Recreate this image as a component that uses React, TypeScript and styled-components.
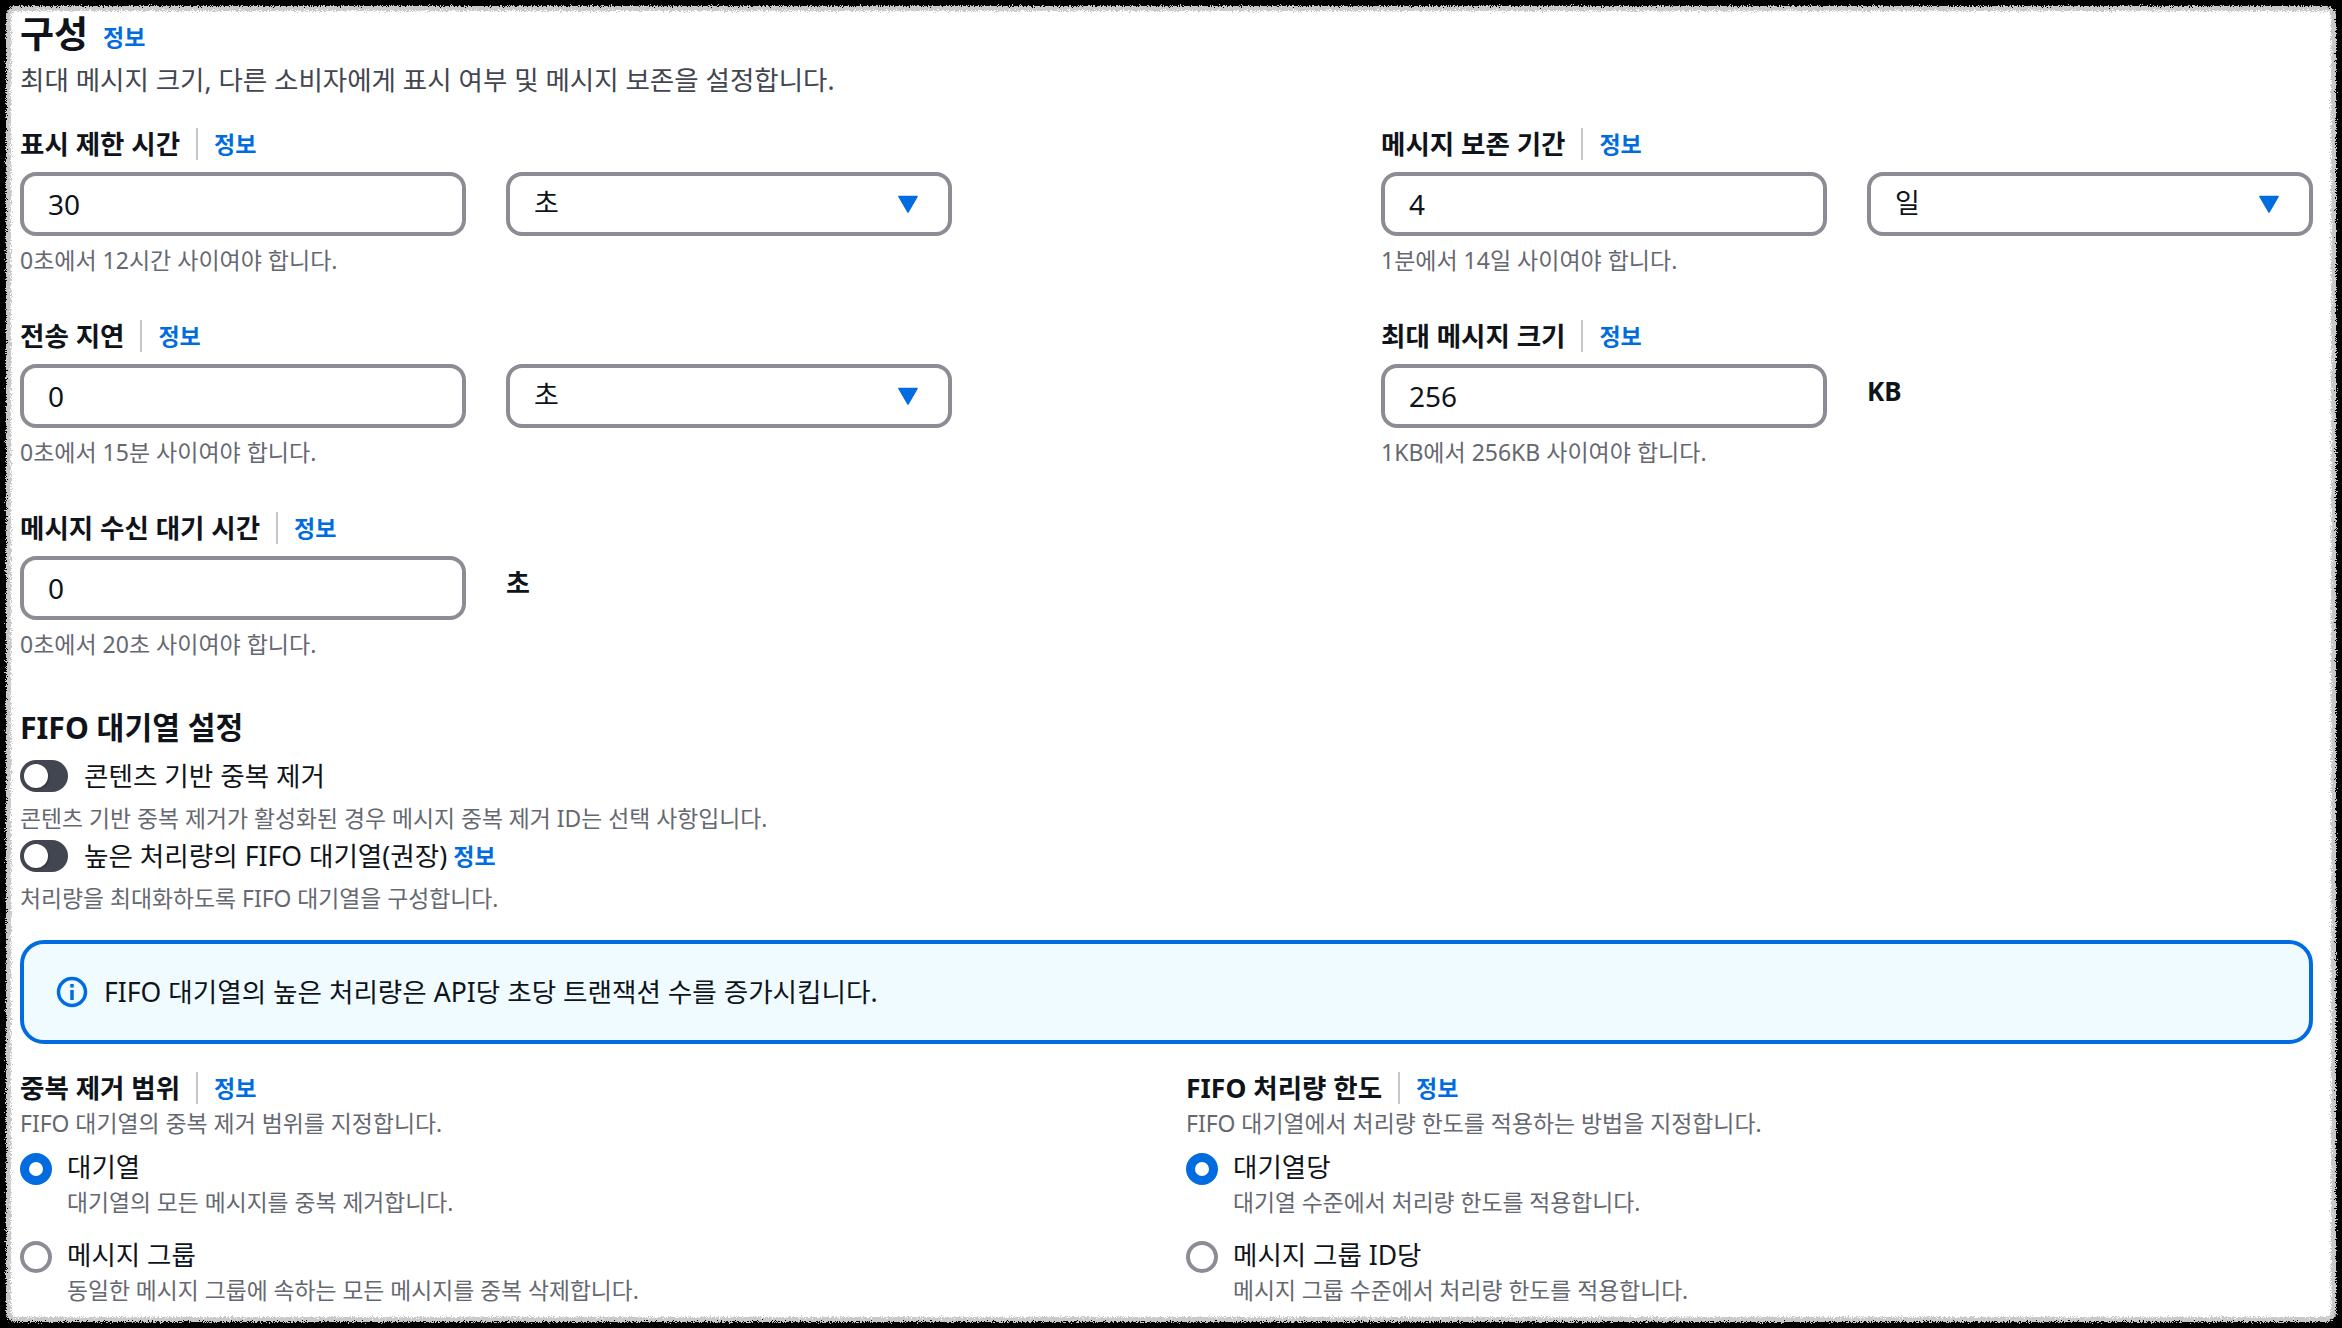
import React from 'react';
import styled, { createGlobalStyle } from 'styled-components';

const GlobalStyle = createGlobalStyle`
  html, body {
    margin: 0;
    padding: 0;
    background: #000000;
  }
  body {
    font-family: "Noto Sans", "Noto Sans CJK KR", sans-serif;
    color: #0f141a;
  }
`;

function InfoLink({ plain }: { plain?: boolean }) {
  return <Info $plain={plain}>정보</Info>;
}

function FieldLabel({ text }: { text: string }) {
  return (
    <LabelRow>
      <LabelText>{text}</LabelText>
      <Divider />
      <InfoLink />
    </LabelRow>
  );
}

function CaretDown() {
  return (
    <svg width="20" height="20" viewBox="0 0 20 20">
      <path d="M1 2.5 H19 L10 18 Z" fill="#006ce0" stroke="#006ce0" strokeWidth="1.5" strokeLinejoin="round" />
    </svg>
  );
}

type FieldProps = {
  label: string;
  value: string;
  select?: string;
  unit?: string;
  hint: string;
};

function Field({ label, value, select, unit, hint }: FieldProps) {
  return (
    <FieldBox>
      <FieldLabel text={label} />
      <Controls>
        <NumberBox>{value}</NumberBox>
        {select && (
          <SelectBox>
            <SelectValue>{select}</SelectValue>
            <CaretDown />
          </SelectBox>
        )}
        {unit && <Unit>{unit}</Unit>}
      </Controls>
      <FieldHint>{hint}</FieldHint>
    </FieldBox>
  );
}

function Toggle({ label, hint, info }: { label: string; hint: string; info?: boolean }) {
  return (
    <ToggleBlock>
      <ToggleRow>
        <Track>
          <Knob />
        </Track>
        <ToggleLabel>{label}</ToggleLabel>
        {info && <InfoLink />}
      </ToggleRow>
      <Hint>{hint}</Hint>
    </ToggleBlock>
  );
}

function Radio({ checked, label, hint }: { checked?: boolean; label: string; hint: string }) {
  return (
    <RadioRow>
      <RadioDot $checked={checked} />
      <div>
        <RadioLabel>{label}</RadioLabel>
        <RadioHint>{hint}</RadioHint>
      </div>
    </RadioRow>
  );
}

function RadioGroup(props: {
  label: string;
  hint: string;
  options: { label: string; hint: string }[];
}) {
  return (
    <div>
      <FieldLabel text={props.label} />
      <GroupHint>{props.hint}</GroupHint>
      <RadioList>
        {props.options.map((option, i) => (
          <Radio key={option.label} checked={i === 0} label={option.label} hint={option.hint} />
        ))}
      </RadioList>
    </div>
  );
}

export default function App() {
  return (
    <Page>
      <GlobalStyle />
      {/* rough edge of the cut-out */}
      <FilterDefs aria-hidden="true">
        <filter id="torn" x="-2%" y="-2%" width="104%" height="104%">
          <feTurbulence type="fractalNoise" baseFrequency="0.9" numOctaves="2" seed="4" result="noise" />
          <feDisplacementMap in="SourceGraphic" in2="noise" scale="7" xChannelSelector="R" yChannelSelector="G" />
        </filter>
      </FilterDefs>
      <Card>
        <TitleRow>
          <Title>구성</Title>
          <InfoLink plain />
        </TitleRow>
        <Description>최대 메시지 크기, 다른 소비자에게 표시 여부 및 메시지 보존을 설정합니다.</Description>

        <FieldGrid>
          <Field label="표시 제한 시간" value="30" select="초" hint="0초에서 12시간 사이여야 합니다." />
          <Field label="메시지 보존 기간" value="4" select="일" hint="1분에서 14일 사이여야 합니다." />
          <Field label="전송 지연" value="0" select="초" hint="0초에서 15분 사이여야 합니다." />
          <Field label="최대 메시지 크기" value="256" unit="KB" hint="1KB에서 256KB 사이여야 합니다." />
          <Field label="메시지 수신 대기 시간" value="0" unit="초" hint="0초에서 20초 사이여야 합니다." />
        </FieldGrid>

        <SectionTitle>FIFO 대기열 설정</SectionTitle>
        <Toggle label="콘텐츠 기반 중복 제거" hint="콘텐츠 기반 중복 제거가 활성화된 경우 메시지 중복 제거 ID는 선택 사항입니다." />
        <Toggle label="높은 처리량의 FIFO 대기열(권장)" info hint="처리량을 최대화하도록 FIFO 대기열을 구성합니다." />

        <Banner>
          <svg width="32" height="32" viewBox="0 0 32 32" fill="none">
            <circle cx="16" cy="16" r="13.5" stroke="#006ce0" strokeWidth="3.5" />
            <path d="M16 14 V24" stroke="#006ce0" strokeWidth="3.5" />
            <path d="M16 8 V11.5" stroke="#006ce0" strokeWidth="3.5" />
          </svg>
          <BannerText>FIFO 대기열의 높은 처리량은 API당 초당 트랜잭션 수를 증가시킵니다.</BannerText>
        </Banner>

        <RadioGrid>
          <RadioGroup
            label="중복 제거 범위"
            hint="FIFO 대기열의 중복 제거 범위를 지정합니다."
            options={[
              { label: '대기열', hint: '대기열의 모든 메시지를 중복 제거합니다.' },
              { label: '메시지 그룹', hint: '동일한 메시지 그룹에 속하는 모든 메시지를 중복 삭제합니다.' },
            ]}
          />
          <RadioGroup
            label="FIFO 처리량 한도"
            hint="FIFO 대기열에서 처리량 한도를 적용하는 방법을 지정합니다."
            options={[
              { label: '대기열당', hint: '대기열 수준에서 처리량 한도를 적용합니다.' },
              { label: '메시지 그룹 ID당', hint: '메시지 그룹 수준에서 처리량 한도를 적용합니다.' },
            ]}
          />
        </RadioGrid>
      </Card>
    </Page>
  );
}

const Page = styled.div`
  width: 2342px;
  height: 1328px;
  box-sizing: border-box;
  padding: 5px;
  background: #000000;
  overflow: hidden;
`;

const FilterDefs = styled.svg`
  display: block;
  width: 0;
  height: 0;
`;

const Card = styled.main`
  position: relative;
  z-index: 0;
  box-sizing: border-box;
  height: 100%;
  padding: 4px 24px 0 15px;

  &::before {
    content: '';
    position: absolute;
    inset: 1px;
    z-index: -1;
    background: #ffffff;
    border-radius: 10px;
    box-shadow: inset 0 0 0 5px #c9c9c9;
    filter: url(#torn);
  }
`;

const TitleRow = styled.div`
  display: flex;
  align-items: center;
  gap: 15px;
  height: 50px;
`;

const Title = styled.h1`
  margin: 0;
  font-size: 37px;
  line-height: 50px;
  font-weight: 700;
`;

const Info = styled.a<{ $plain?: boolean }>`
  color: #006ce0;
  font-size: 23px;
  font-weight: 700;
  line-height: 32px;
  ${(p) => (p.$plain ? 'margin-top: 5px;' : '')}
`;

const Description = styled.p`
  margin: 1px 0 0;
  font-size: 26.5px;
  line-height: 40px;
  color: #424650;
`;

const FieldGrid = styled.div`
  display: grid;
  grid-template-columns: 1361px 1fr;
  row-gap: 42px;
  margin-top: 26px;
`;

const FieldBox = styled.div`
  display: flex;
  flex-direction: column;
`;

const LabelRow = styled.div`
  display: flex;
  align-items: center;
  height: 36px;
`;

const LabelText = styled.span`
  font-size: 26.5px;
  font-weight: 700;
  line-height: 36px;
`;

const Divider = styled.span`
  width: 2px;
  height: 32px;
  margin: 0 16px;
  background: #c6c6cd;
`;

const Controls = styled.div`
  display: flex;
  gap: 40px;
  margin-top: 10px;
`;

const NumberBox = styled.div`
  box-sizing: border-box;
  width: 446px;
  height: 64px;
  padding: 0 24px;
  display: flex;
  align-items: center;
  border: 4px solid #8c8c94;
  border-radius: 16px;
  font-size: 28px;
`;

const SelectBox = styled(NumberBox)`
  justify-content: space-between;
  padding-right: 30px;
`;

const SelectValue = styled.span`
  font-size: 27px;
  line-height: 32px;
  padding-bottom: 2px;
`;

const Unit = styled.span`
  font-size: 26px;
  font-weight: 700;
  line-height: 54px;
`;

const Hint = styled.div`
  margin-top: 9px;
  font-size: 22.85px;
  line-height: 32px;
  color: #656871;
`;

const FieldHint = styled(Hint)`
  margin-top: 8px;
  font-size: 23px;
`;

const SectionTitle = styled.h2`
  margin: 46px 0 0;
  font-size: 30.2px;
  line-height: 44px;
  font-weight: 700;
`;

const ToggleBlock = styled.div`
  display: flex;
  flex-direction: column;

  & + & {
    margin-top: 3px;
  }

  h2 + & {
    margin-top: 8px;
  }
`;

const ToggleRow = styled.div`
  display: flex;
  align-items: center;
  height: 36px;
`;

const Track = styled.span`
  position: relative;
  width: 48px;
  height: 32px;
  margin-right: 16px;
  border-radius: 16px;
  background: #424650;
`;

const Knob = styled.span`
  position: absolute;
  top: 4px;
  left: 4px;
  width: 24px;
  height: 24px;
  border-radius: 50%;
  background: #ffffff;
  box-shadow: 1px 1px 2px rgba(0, 0, 0, 0.3);
`;

const ToggleLabel = styled.span`
  font-size: 26.6px;
  margin-right: 6px;
  padding-bottom: 4px;
`;

const Banner = styled.div`
  box-sizing: border-box;
  height: 104px;
  margin-top: 25px;
  padding: 0 32px;
  display: flex;
  align-items: center;
  gap: 16px;
  border: 4px solid #006ce0;
  border-radius: 24px;
  background: #f0fbff;
  font-size: 26.6px;
`;

const BannerText = styled.span`
  padding-bottom: 3px;
`;

const RadioGrid = styled.div`
  display: grid;
  grid-template-columns: 1166px 1fr;
  margin-top: 26px;
`;

const GroupHint = styled.div`
  font-size: 22.9px;
  line-height: 35px;
  color: #656871;
`;

const RadioList = styled.div`
  display: flex;
  flex-direction: column;
  gap: 16px;
  margin-top: 8px;
`;

const RadioRow = styled.div`
  display: flex;
  gap: 15px;
`;

const RadioDot = styled.span<{ $checked?: boolean }>`
  box-sizing: border-box;
  flex: none;
  width: 32px;
  height: 32px;
  margin-top: 4px;
  border-radius: 50%;
  border: ${(p) => (p.$checked ? '9px solid #006ce0' : '4px solid #8c8c94')};
`;

const RadioLabel = styled.div`
  font-size: 26.5px;
  line-height: 36px;
`;

const RadioHint = styled.div`
  font-size: 22.8px;
  line-height: 36px;
  color: #656871;
`;
